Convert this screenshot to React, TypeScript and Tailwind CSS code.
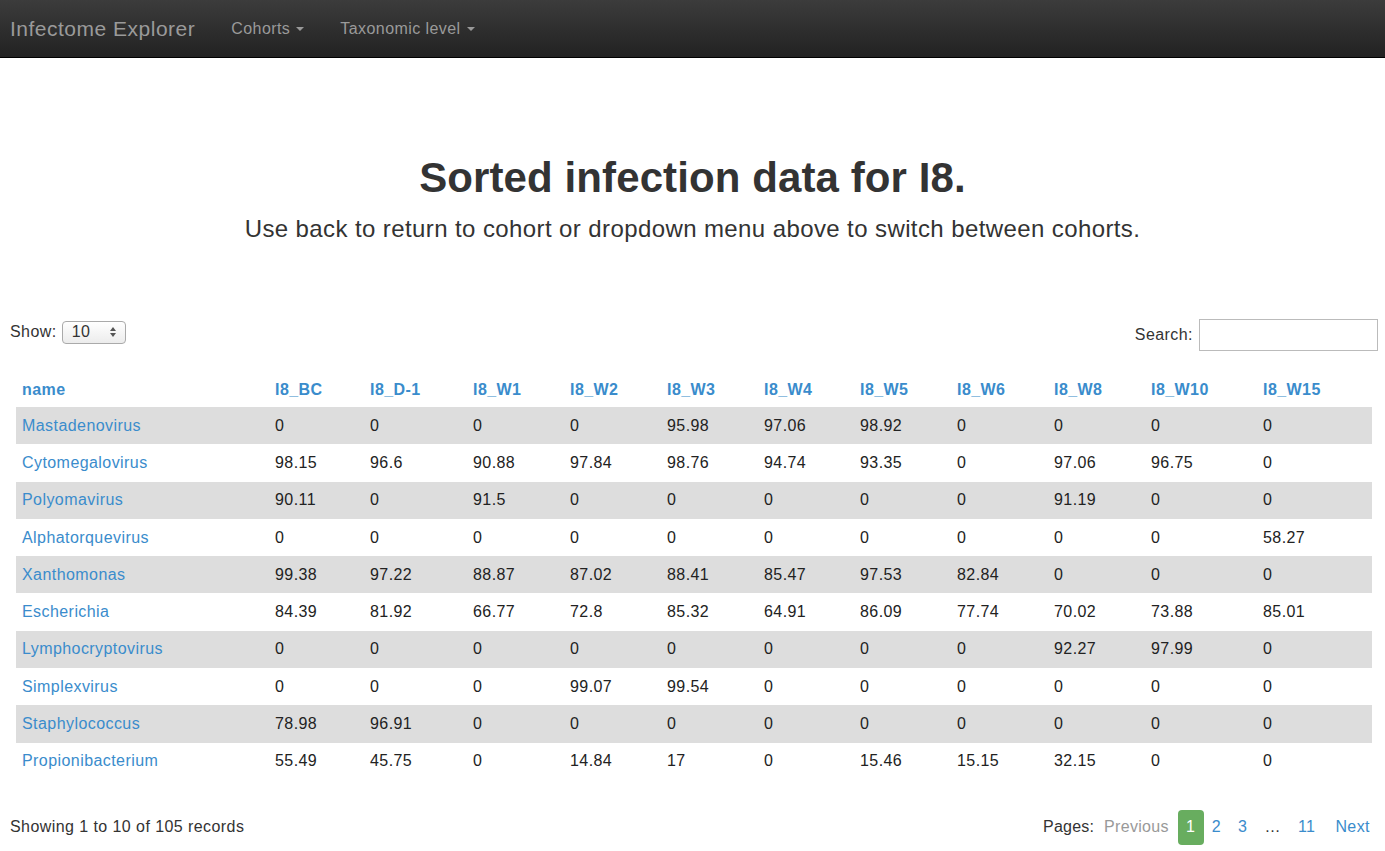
import React from "react";

const cols = ["I8_BC", "I8_D-1", "I8_W1", "I8_W2", "I8_W3", "I8_W4", "I8_W5", "I8_W6", "I8_W8", "I8_W10", "I8_W15"];
const widths = [253, 95, 103, 97, 97, 97, 96, 97, 97, 97, 112, 115];

const rows: [string, string[]][] = [
  ["Mastadenovirus", ["0", "0", "0", "0", "95.98", "97.06", "98.92", "0", "0", "0", "0"]],
  ["Cytomegalovirus", ["98.15", "96.6", "90.88", "97.84", "98.76", "94.74", "93.35", "0", "97.06", "96.75", "0"]],
  ["Polyomavirus", ["90.11", "0", "91.5", "0", "0", "0", "0", "0", "91.19", "0", "0"]],
  ["Alphatorquevirus", ["0", "0", "0", "0", "0", "0", "0", "0", "0", "0", "58.27"]],
  ["Xanthomonas", ["99.38", "97.22", "88.87", "87.02", "88.41", "85.47", "97.53", "82.84", "0", "0", "0"]],
  ["Escherichia", ["84.39", "81.92", "66.77", "72.8", "85.32", "64.91", "86.09", "77.74", "70.02", "73.88", "85.01"]],
  ["Lymphocryptovirus", ["0", "0", "0", "0", "0", "0", "0", "0", "92.27", "97.99", "0"]],
  ["Simplexvirus", ["0", "0", "0", "99.07", "99.54", "0", "0", "0", "0", "0", "0"]],
  ["Staphylococcus", ["78.98", "96.91", "0", "0", "0", "0", "0", "0", "0", "0", "0"]],
  ["Propionibacterium", ["55.49", "45.75", "0", "14.84", "17", "0", "15.46", "15.15", "32.15", "0", "0"]],
];

function Caret() {
  return <span className="inline-block ml-[6px] align-middle w-0 h-0 border-l-[4px] border-r-[4px] border-t-[4px] border-l-transparent border-r-transparent border-t-[#999]" />;
}

export default function App() {
  return (
    <div className="min-h-[851px] bg-white text-[#333] font-['Liberation_Sans',Arial,sans-serif] tracking-[0.43px]">
      <nav className="h-[58px] bg-gradient-to-b from-[#3c3c3c] to-[#222] border-b border-black flex items-center">
        <span className="ml-[10px] text-[21px] text-[#9a9a9a] tracking-[0.5px]">Infectome Explorer</span>
        <span className="ml-[36px] text-[16px] text-[#9a9a9a] flex items-center">Cohorts<Caret /></span>
        <span className="ml-[36px] text-[16px] text-[#9a9a9a] flex items-center">Taxonomic level<Caret /></span>
      </nav>

      <div className="text-center pt-[95px]">
        <h1 className="text-[42px] font-bold leading-[50px] text-[#333] tracking-[0.1px]">Sorted infection data for I8.</h1>
        <p className="text-[24px] leading-[30px] mt-[11px] text-[#333] tracking-[0.4px]">Use back to return to cohort or dropdown menu above to switch between cohorts.</p>
      </div>

      <div className="mt-[76px] px-[10px] pr-[7px] flex justify-between">
        <div className="flex items-center h-[24px] mt-[0px] text-[16px]">
          <span>Show:</span>
          <div className="ml-[5px] w-[64px] h-[23px] border border-[#aaa] rounded-[4px] bg-gradient-to-b from-white to-[#ececec] flex items-center justify-between px-[9px] text-[16px]">
            <span>10</span>
            <svg width="6" height="10" viewBox="0 0 6 10"><path d="M3 0L6 4H0z M3 10L0 6H6z" fill="#555" /></svg>
          </div>
        </div>
        <div className="flex items-center mt-[-1px] text-[16px]">
          <span>Search:</span>
          <div className="ml-[6px] w-[179px] h-[32px] border border-[#bbb] bg-white" />
        </div>
      </div>

      <div className="ml-[16px] mr-[13px] mt-[21px]">
        <table className="table-fixed border-collapse text-[16px] w-[1356px]">
          <colgroup>
            {widths.map((w, i) => (
              <col key={i} style={{ width: w }} />
            ))}
          </colgroup>
          <thead>
            <tr className="h-[35px]">
              <th className="text-left pl-[6px] font-bold text-[#3a8ccc] align-middle">name</th>
              {cols.map((c) => (
                <th key={c} className="text-left pl-[6px] font-bold text-[#3a8ccc] align-middle">{c}</th>
              ))}
            </tr>
          </thead>
          <tbody>
            {rows.map(([n, v], i) => (
              <tr key={n} className={`h-[37.3px] ${i % 2 === 0 ? "bg-[#dddddd]" : "bg-white"}`}>
                <td className="pl-[6px] text-[#3a8ccc] align-middle">{n}</td>
                {v.map((x, j) => (
                  <td key={j} className="pl-[6px] text-[#222] align-middle">{x}</td>
                ))}
              </tr>
            ))}
          </tbody>
        </table>
      </div>

      <div className="mt-[30px] px-[10px] pr-[15px] flex justify-between items-center text-[16px]">
        <span>Showing 1 to 10 of 105 records</span>
        <div className="flex items-center">
          <span className="tracking-[0.2px]">Pages:</span>
          <span className="ml-[10px] text-[#999] tracking-[0.3px]">Previous</span>
          <span className="ml-[9px] w-[26px] h-[35px] rounded-[4px] bg-[#68ad5f] text-white flex items-center justify-center">1</span>
          <span className="ml-[8px] text-[#3a8ccc]">2</span>
          <span className="ml-[17px] text-[#3a8ccc]">3</span>
          <span className="ml-[17px]">…</span>
          <span className="ml-[17px] text-[#3a8ccc]">11</span>
          <span className="ml-[20px] text-[#3a8ccc]">Next</span>
        </div>
      </div>
    </div>
  );
}
